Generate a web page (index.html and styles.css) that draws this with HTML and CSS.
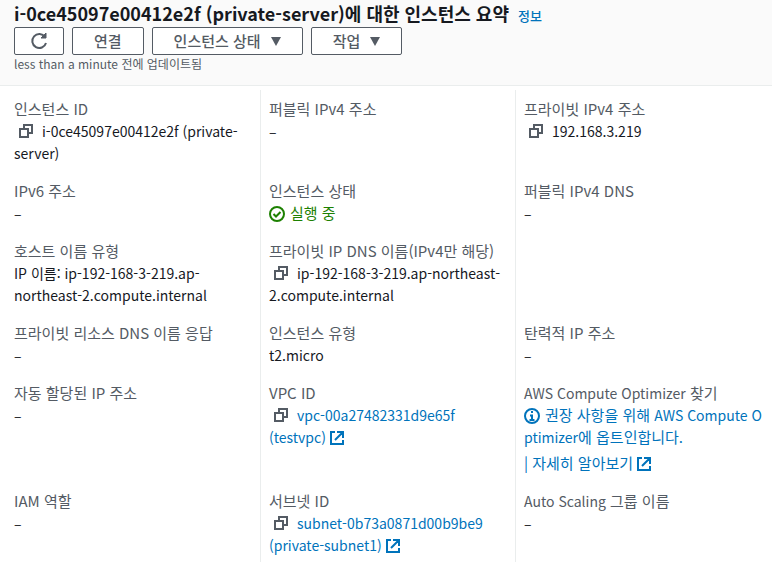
FILE: index.html
```html
<!DOCTYPE html>
<html lang="ko">

<head>
	<meta charset="utf-8">
	<title>인스턴스 요약</title>
	<link rel="stylesheet" href="styles.css">
</head>

<body>
	<svg class="sprite" aria-hidden="true">
		<symbol id="copy" viewBox="0 0 14 14">
			<path d="M1 5h8v8H1zM5 5V1h8v8H9" fill="none" stroke="currentColor" stroke-width="2" />
		</symbol>
		<symbol id="external" viewBox="0 0 14 14">
			<path d="M5 1H1v12h12V9M7 1h6v6M13 1L5 9" fill="none" stroke="currentColor" stroke-width="2" />
		</symbol>
	</svg>

	<header class="header">
		<div class="title">
			<h1>i-0ce45097e00412e2f (private-server)에 대한 인스턴스 요약</h1>
			<a class="info" href="#">정보</a>
		</div>
		<div class="actions">
			<button type="button" class="btn btn-refresh" aria-label="새로 고침">
				<svg width="18" height="18" viewBox="0 0 18 18">
					<path d="M16 11A7 7 0 1 1 15 5" fill="none" stroke="currentColor" stroke-width="2" />
					<path d="M11 6h5V1z" fill="currentColor" stroke="currentColor" stroke-width="1" />
				</svg>
			</button>
			<button type="button" class="btn">연결</button>
			<button type="button" class="btn">인스턴스 상태 <span class="caret"></span></button>
			<button type="button" class="btn">작업 <span class="caret"></span></button>
		</div>
		<p class="updated">less than a minute 전에 업데이트됨</p>
	</header>

	<dl class="details">
		<div class="cell">
			<dt>인스턴스 ID</dt>
			<dd><button type="button" class="copy" aria-label="복사"><svg><use href="#copy" /></svg></button>i-0ce45097e00412e2f (private-server)</dd>
		</div>
		<div class="cell">
			<dt>퍼블릭 IPv4 주소</dt>
			<dd>–</dd>
		</div>
		<div class="cell">
			<dt>프라이빗 IPv4 주소</dt>
			<dd><button type="button" class="copy" aria-label="복사"><svg><use href="#copy" /></svg></button>192.168.3.219</dd>
		</div>

		<div class="cell">
			<dt>IPv6 주소</dt>
			<dd>–</dd>
		</div>
		<div class="cell">
			<dt>인스턴스 상태</dt>
			<dd class="running"><svg class="status" viewBox="0 0 16 16"><circle cx="8" cy="8" r="7" /><path d="M4.5 8l2.5 2.5L11.5 6" /></svg>실행 중</dd>
		</div>
		<div class="cell">
			<dt>퍼블릭 IPv4 DNS</dt>
			<dd>–</dd>
		</div>

		<div class="cell">
			<dt>호스트 이름 유형</dt>
			<dd>IP 이름: ip-192-168-3-219.ap-northeast-2.compute.internal</dd>
		</div>
		<div class="cell">
			<dt>프라이빗 IP DNS 이름(IPv4만 해당)</dt>
			<dd><button type="button" class="copy" aria-label="복사"><svg><use href="#copy" /></svg></button>ip-192-168-3-219.ap-northeast-<wbr>2.compute.internal</dd>
		</div>
		<div class="cell"></div>

		<div class="cell">
			<dt>프라이빗 리소스 DNS 이름 응답</dt>
			<dd>–</dd>
		</div>
		<div class="cell">
			<dt>인스턴스 유형</dt>
			<dd>t2.micro</dd>
		</div>
		<div class="cell">
			<dt>탄력적 IP 주소</dt>
			<dd>–</dd>
		</div>

		<div class="cell">
			<dt>자동 할당된 IP 주소</dt>
			<dd>–</dd>
		</div>
		<div class="cell">
			<dt>VPC ID</dt>
			<dd><button type="button" class="copy" aria-label="복사"><svg><use href="#copy" /></svg></button><a href="#">vpc-00a27482331d9e65f (testvpc) <svg class="external"><use href="#external" /></svg></a></dd>
		</div>
		<div class="cell">
			<dt><span class="latin">AWS Compute Optimizer</span> 찾기</dt>
			<dd class="optimizer"><a href="#"><svg class="status" viewBox="0 0 16 16"><circle cx="8" cy="8" r="7" /><path d="M8 3v2M6 7.5h2V12M5.5 12h5" /></svg>권장 사항을 위해 <span class="latin">AWS Compute Optimizer</span>에 옵트인합니다.</a></dd>
			<dd class="more"><a href="#">| 자세히 알아보기 <svg class="external"><use href="#external" /></svg></a></dd>
		</div>

		<div class="cell">
			<dt>IAM 역할</dt>
			<dd>–</dd>
		</div>
		<div class="cell">
			<dt>서브넷 ID</dt>
			<dd><button type="button" class="copy" aria-label="복사"><svg><use href="#copy" /></svg></button><a href="#">subnet-0b73a0871d00b9be9 (private-subnet1) <svg class="external"><use href="#external" /></svg></a></dd>
		</div>
		<div class="cell">
			<dt><span class="latin">Auto Scaling</span> 그룹 이름</dt>
			<dd>–</dd>
		</div>
	</dl>
</body>

</html>
```
FILE: styles.css
```css
* {
	box-sizing: border-box;
}

body {
	display: flex;
	flex-direction: column;
	min-height: 100vh;
	margin: 0;
	background-color: #fff;
	color: #16191f;
	font-family: "Noto Sans CJK KR", sans-serif;
	font-size: 15px;
	line-height: 22px;
}

a {
	color: #0073bb;
	text-decoration: none;
}

a:hover {
	text-decoration: underline;
}

.sprite {
	position: absolute;
	width: 0;
	height: 0;
}

.header {
	padding: 1px 14px 12px;
	border-bottom: 1px solid #eaeded;
	background-color: #fafafa;
}

.title {
	display: flex;
	align-items: baseline;
	gap: 9px;
	height: 26px;
}

h1 {
	margin: 0;
	font-size: 18px;
	font-weight: bold;
	line-height: 24px;
}

.info {
	font-size: 13px;
	font-weight: 500;
}

.actions {
	display: flex;
	gap: 8px;
}

.btn {
	display: flex;
	align-items: center;
	justify-content: center;
	height: 28px;
	padding: 0 21px;
	border: 1px solid #545b64;
	border-radius: 2px;
	background-color: #fff;
	color: #545b64;
	font-family: inherit;
	font-size: 15px;
	font-weight: 500;
	line-height: 22px;
	cursor: pointer;
}

.btn:hover {
	background-color: #fafafa;
}

.btn-refresh {
	padding: 0 15px;
}

.caret {
	margin-left: 10px;
	border-top: 9px solid #545b64;
	border-left: 5px solid transparent;
	border-right: 5px solid transparent;
}

.updated {
	margin: 0;
	color: #545b64;
	font-size: 12px;
	line-height: 18px;
}

.details {
	display: grid;
	grid-template-columns: repeat(3, 1fr);
	grid-template-rows: repeat(5, auto) 1fr;
	flex: 1;
	margin: 0;
	padding: 4px 2px 0 5px;
}

.cell {
	padding: 8px 6px 8px 9px;
}

/* separators between the columns */
.cell:nth-child(3n + 2),
.cell:nth-child(3n) {
	padding-left: 8px;
	border-left: 1px solid #eaeded;
}

.cell:nth-last-child(-n + 3) {
	padding-bottom: 0;
}

dt {
	color: #545b64;
}

dd {
	margin: 0;
	font-size: 14px;
}

.latin {
	font-size: 14px;
	line-height: 1;
}

.copy {
	width: 14px;
	height: 14px;
	margin: 0 9px 0 5px;
	padding: 0;
	border: none;
	background: none;
	color: #545b64;
	vertical-align: -1px;
	cursor: pointer;
}

.copy svg {
	display: block;
	width: 14px;
	height: 14px;
}

.external {
	width: 14px;
	height: 14px;
	vertical-align: -2px;
}

.status {
	width: 16px;
	height: 16px;
	margin-right: 5px;
	fill: none;
	stroke: currentColor;
	stroke-width: 2;
	vertical-align: -3px;
}

.running {
	color: #1d8102;
	font-size: 15px;
}

.optimizer,
.more {
	font-size: 15px;
}

.optimizer {
	word-break: break-all;
}

.more {
	margin-top: 4px;
}
```
